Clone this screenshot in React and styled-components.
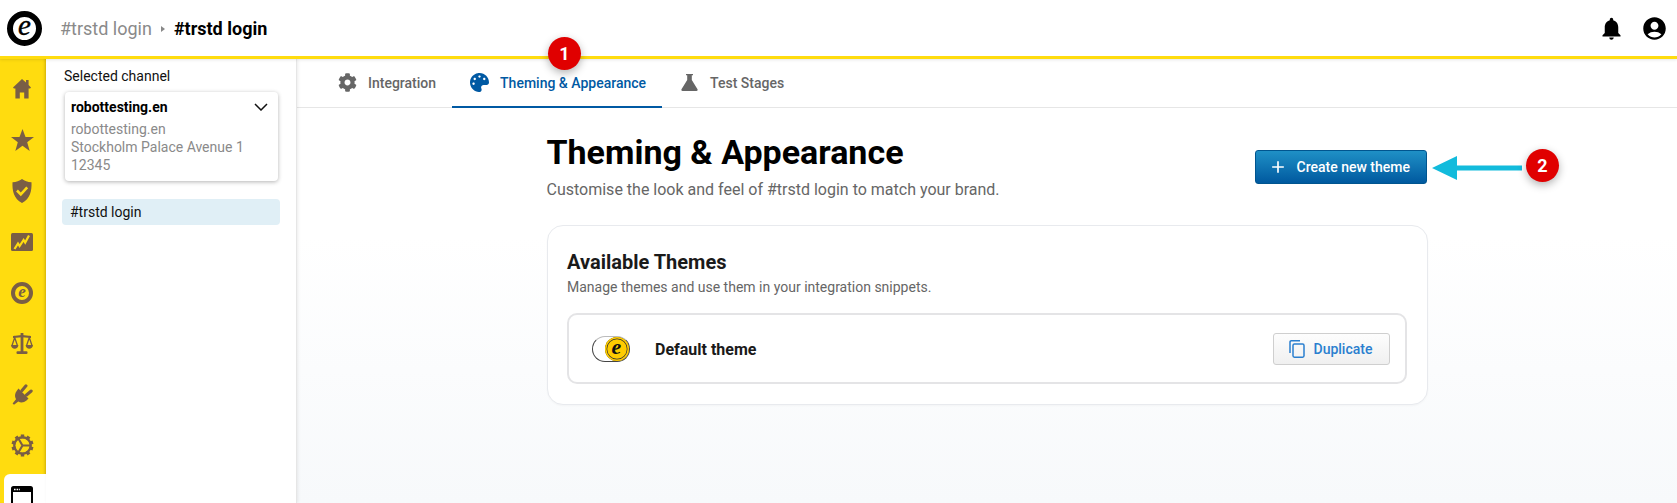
import React from "react";
import styled, { createGlobalStyle } from "styled-components";
import { FaCog, FaPalette } from "react-icons/fa";
import { MdNotifications, MdAccountCircle, MdAdd } from "react-icons/md";

const Global = createGlobalStyle`
  html, body { margin: 0; padding: 0; height: 503px; overflow: hidden; background: #fff; }
  body { font-family: Roboto, "Liberation Sans", sans-serif; }
  * { box-sizing: border-box; }
`;

const Page = styled.div`
  position: relative;
  width: 1677px;
  height: 503px;
  overflow: hidden;
  display: flex;
  flex-direction: column;
`;

const Header = styled.header`
  height: 59px;
  flex: none;
  display: flex;
  align-items: center;
  padding: 0 9px 0 7px;
  background: #fff;
  border-bottom: 3px solid #ffdc0f;
  box-shadow: 0 1px 3px rgba(0,0,0,.1);
  position: relative;
  z-index: 3;
`;

const LogoDisc = styled.div`
  width: 35px;
  height: 35px;
  border-radius: 50%;
  background: #fff;
  border: 6px solid #000;
  color: #000;
  display: flex;
  align-items: center;
  justify-content: center;
  font: italic 400 29px/1 "Liberation Serif", serif;
  -webkit-text-stroke: 0.4px #000;
  padding-bottom: 5px;
`;

const Crumbs = styled.nav`
  display: flex;
  align-items: center;
  margin-left: 18px;
  font-size: 18px;
  color: #8a8a8a;
  flex: 1;
`;

const CrumbArrow = styled.span`
  width: 0;
  height: 0;
  margin: 1px 9px 0 9px;
  border-left: 4px solid #888;
  border-top: 3px solid transparent;
  border-bottom: 3px solid transparent;
`;

const CrumbNow = styled.span`
  color: #000;
  font-weight: 700;
`;

const HeaderIcons = styled.div`
  display: flex;
  align-items: center;
  gap: 16px;
  margin-top: 1px;
  color: #000;
  font-size: 27px;
  svg { display: block; }
`;

const Body = styled.div`
  flex: 1;
  min-height: 0;
  display: flex;
`;

const Rail = styled.aside`
  width: 46px;
  flex: none;
  background: #ffdc0f;
  box-shadow: inset -3px 0 3px -2px rgba(120,90,0,.35);
  display: flex;
  flex-direction: column;
  padding-top: 4px;
`;

const RailItem = styled.div`
  height: 51px;
  flex: none;
  display: flex;
  align-items: center;
  justify-content: center;
  padding-right: 2px;
  svg { display: block; }
`;

const RailActive = styled.div`
  flex: 1;
  margin: 3px 0 0 4px;
  background: #fff;
  border-radius: 6px 0 0 0;
  padding: 12px 0 0 7px;
  min-height: 30px;
`;

const RailE = styled.div`
  width: 22px;
  height: 22px;
  border-radius: 50%;
  background: #ffdc0f;
  border: 4px solid #7a5e45;
  color: #7a5e45;
  display: flex;
  align-items: center;
  justify-content: center;
  font: italic 700 17px/1 "Liberation Serif", serif;
  padding-bottom: 3px;
`;

const Panel = styled.aside`
  width: 251px;
  flex: none;
  background: #fff;
  border-right: 1px solid #e6e6e6;
  box-shadow: 1px 0 3px rgba(0,0,0,.08);
  padding: 9px 15px 0 16px;
  position: relative;
`;

const PanelLabel = styled.div`
  font-size: 14px;
  line-height: 16px;
  color: #111;
  padding-left: 2px;
`;

const ChannelCard = styled.div`
  margin: 8px 3px 0 3px;
  height: 89px;
  background: #fff;
  border-radius: 4px;
  box-shadow: 0 1px 4px rgba(0,0,0,.3);
  padding: 6px 6px;
  font-size: 14px;
  line-height: 18px;
  color: #8a8a8a;
`;

const ChannelName = styled.div`
  display: flex;
  justify-content: space-between;
  align-items: center;
  color: #000;
  font-weight: 700;
  height: 18px;
  margin-bottom: 4px;
`;

const Chevron = styled.svg`
  margin-right: 4px;
  display: block;
`;

const PanelItem = styled.div`
  margin-top: 18px;
  height: 26px;
  width: 218px;
  border-radius: 4px;
  background: #e0eff6;
  padding-left: 8px;
  font-size: 14px;
  line-height: 26px;
  color: #111;
`;

const Main = styled.main`
  flex: 1;
  min-width: 0;
  display: flex;
  flex-direction: column;
  background: linear-gradient(180deg, #ffffff 40%, #f7f9fb 100%);
`;

const Tabs = styled.div`
  height: 49px;
  flex: none;
  display: flex;
  padding-left: 23px;
  background: #fff;
  border-bottom: 1px solid #e6e6e6;
`;

const Tab = styled.div`
  display: flex;
  align-items: center;
  gap: 10px;
  padding: 0 16px;
  height: 49px;
  font-size: 14px;
  font-weight: 500;
  color: ${p => (p.$active ? "#0059a3" : "#666")};
  border-bottom: 2px solid ${p => (p.$active ? "#0059a3" : "transparent")};
`;

const TabIcon = styled.span`
  width: 22px;
  display: flex;
  justify-content: center;
  font-size: 19px;
`;

const Content = styled.div`
  width: 881px;
  margin: 0 auto;
  padding-top: 23px;
`;

const TitleRow = styled.div`
  display: flex;
  justify-content: space-between;
  align-items: flex-start;
`;

const Title = styled.h1`
  margin: 0;
  font-size: 34px;
  line-height: 42px;
  font-weight: 700;
  color: #000;
`;

const Subtitle = styled.p`
  margin: 7px 0 0;
  font-size: 16px;
  line-height: 20px;
  color: #666;
`;

const PrimaryButton = styled.button`
  margin: 19px 1px 0 0;
  width: 172px;
  height: 34px;
  border: 1px solid #00558f;
  border-radius: 3px;
  background: linear-gradient(180deg, #1f90c6 0%, #00599f 100%);
  color: #fff;
  font: 500 14px Roboto, sans-serif;
  display: flex;
  align-items: center;
  padding: 0 0 0 12px;
  gap: 9px;
  svg { font-size: 20px; }
`;

const Card = styled.section`
  margin-top: 25px;
  height: 180px;
  background: #fff;
  border: 1px solid #e8eaee;
  border-radius: 16px;
  padding: 23px 20px 0 19.5px;
  box-shadow: 0 1px 2px rgba(0,0,0,.03);
`;

const CardTitle = styled.h2`
  margin: 0;
  font-size: 20px;
  line-height: 26px;
  font-weight: 700;
  color: #1a1a1a;
`;

const CardSub = styled.p`
  margin: 3px 0 0;
  font-size: 14px;
  line-height: 18px;
  color: #666;
`;

const ThemeRow = styled.div`
  margin-top: 17px;
  height: 71px;
  border: 2px solid #e4e4e6;
  border-radius: 10px;
  display: flex;
  align-items: center;
  padding: 0 15px 0 22.5px;
`;

const Toggle = styled.div`
  width: 38px;
  height: 26px;
  border: 1px solid #444;
  border-top-color: #bbb;
  border-radius: 13px;
  display: flex;
  justify-content: flex-end;
  background: linear-gradient(90deg, #fff 40%, #eee 100%);
  flex: none;
`;

const ToggleKnob = styled.div`
  width: 24px;
  height: 24px;
  border-radius: 50%;
  background: #ffcc00;
  box-shadow: inset 0 0 0 1.5px #ffcc00, inset 0 0 0 2.2px #333;
  color: #111;
  display: flex;
  align-items: center;
  justify-content: center;
  font: italic 700 22px/1 "Liberation Serif", serif;
  padding-bottom: 3px;
`;

const ThemeName = styled.div`
  margin: 2px 0 0 25.5px;
  flex: 1;
  font-size: 16px;
  font-weight: 700;
  color: #1a1a1a;
`;

const GhostButton = styled.button`
  width: 117px;
  height: 32px;
  border: 1px solid #cfcfcf;
  border-radius: 3px;
  background: linear-gradient(180deg, #fdfdfd 0%, #f0f0f0 100%);
  color: #2a7fcf;
  font: 500 14px Roboto, sans-serif;
  display: flex;
  align-items: center;
  padding: 0 0 0 15px;
  gap: 9px;
`;

const Badge = styled.div`
  position: absolute;
  left: ${p => p.$x}px;
  top: ${p => p.$y}px;
  width: 33px;
  height: 33px;
  border-radius: 50%;
  background: #e00000;
  color: #fff;
  font-size: 18px;
  font-weight: 700;
  display: flex;
  align-items: center;
  justify-content: center;
  box-shadow: 0 3px 8px rgba(0,0,0,.3);
  z-index: 5;
`;

const ArrowMark = styled.svg`
  position: absolute;
  left: 1432px;
  top: 156px;
  z-index: 4;
`;

const BROWN = "#7a5e45";
const YEL = "#ffdc0f";

const Home = () => (
  <svg width="18" height="20" viewBox="0 0 18 20">
    <path fill={BROWN} d="M9 0l4 3.6V1h2.6v4.9L18 8.6l-.9 1H15.6V19.5h-4.4v-6H6.8v6H2.4V9.6H.9l-.9-1z" />
  </svg>
);

const Star = () => (
  <svg width="23" height="22" viewBox="0 0 23 22">
    <path fill={BROWN} d="M11.5 0l3 8h8.5l-6.8 5.2L18.7 22l-7.2-5.3L4.3 22l2.5-8.8L0 8h8.5z" />
  </svg>
);

const Shield = () => (
  <svg width="20" height="24" viewBox="0 0 20 24">
    <path fill={BROWN} d="M10 0c2.6 2 5.6 3 9.5 3.2.4 8.8-1.3 16.4-9.5 20.8C1.8 19.6.1 12 .5 3.2 4.4 3 7.4 2 10 0z" />
    <path fill="none" stroke={YEL} strokeWidth="2.6" d="M5 11.5l3.8 3.8 6.4-7" />
  </svg>
);

const Chart = () => (
  <svg width="22" height="18" viewBox="0 0 22 18">
    <rect width="22" height="18" rx="1.5" fill={BROWN} />
    <path fill="none" stroke={YEL} strokeWidth="2.2" d="M3.5 16l3.5-5.5 1.6 2.5 4-6 1.6 2.5 3.8-7" />
  </svg>
);

const Scales = () => (
  <svg width="22" height="21" viewBox="0 0 22 21">
    <g fill={BROWN}>
      <rect x="9.6" y="0" width="2.8" height="19" />
      <rect x="5.5" y="18.2" width="11" height="2.8" rx="1" />
      <path d="M2 3L11 2l9 1v2L11 4.2 2 5z" />
      <path d="M0 12h7.4C7.2 14.6 5.600 15.800 3.700 15.800S.2 14.600 0 12zM14.600 12H22c-.2 2.600-1.800 3.800-3.700 3.800S14.800 14.600 14.600 12z" />
    </g>
    <path fill="none" stroke={BROWN} strokeWidth="1.300" d="M1 12.500L3.700 4.500l2.700 8M15.600 12.500l2.700-8 2.700 8" />
  </svg>
);

const Plug = () => (
  <svg width="21" height="21" viewBox="0 0 21 21">
    <path fill={BROWN} d="M6.500 4.500L16.500 14.500l-2 2c-2.600 2.200-5.800 2.400-8.200 1L2 20.800.6 19.400l3.400-4.200c-1.600-2.600-1.200-5.800.8-8.400z" />
    <path stroke={BROWN} strokeWidth="3" strokeLinecap="round" d="M10 6.500l4-4.700M14.500 11l4.700-4" />
  </svg>
);

const Gear = () => {
  const teeth = Array.from({ length: 10 }, (_, i) => i * 36);
  return (
    <svg width="23" height="23" viewBox="0 0 24 24">
      {teeth.map(a => (
        <rect key={a} x="10.200" y="0.500" width="3.600" height="4" fill={BROWN} transform={`rotate(${a} 12 12)`} />
      ))}
      <circle cx="12" cy="12" r="8.600" fill="none" stroke={BROWN} strokeWidth="2.400" />
      <path fill="none" stroke={BROWN} strokeWidth="2.200" d="M12 12L7.500 4.500M12 12L7.500 19.500M12 12h9" />
    </svg>
  );
};

const WindowIcon = () => (
  <svg width="22" height="24" viewBox="0 0 22 24">
    <rect x="1" y="1" width="20" height="30" rx="1.500" fill="#fff" stroke="#000" strokeWidth="2" />
    <rect x="1" y="1" width="20" height="5" fill="#000" />
    <path stroke="#fff" strokeWidth="1.400" strokeDasharray="1.600 1" d="M3 3.500h6" />
  </svg>
);

const Flask = () => (
  <svg width="17" height="17" viewBox="0 0 17 17">
    <path fill="#666" d="M5 0h7v1.300h-1.200v4.700l5.700 9.300c.4.800 0 1.700-1 1.700H1.500c-1 0-1.400-.9-1-1.700l5.700-9.300V1.300H5z" />
  </svg>
);

const CopyIcon = () => (
  <svg width="16" height="18" viewBox="0 0 16 18" fill="none" stroke="#2a7fcf" strokeWidth="1.500">
    <path d="M1 13V2a1.200 1.200 0 0 1 1.200-1.200H11" />
    <rect x="4" y="4" width="11" height="13.200" rx="1.400" />
  </svg>
);

const rail = [
  <Home key="a" />,
  <Star key="b" />,
  <Shield key="c" />,
  <Chart key="d" />,
  <RailE key="e">e</RailE>,
  <Scales key="f" />,
  <Plug key="g" />,
  <Gear key="h" />,
];

export default function App() {
  return (
    <Page>
      <Global />
      <Header>
        <LogoDisc>e</LogoDisc>
        <Crumbs>
          #trstd login
          <CrumbArrow />
          <CrumbNow>#trstd login</CrumbNow>
        </Crumbs>
        <HeaderIcons>
          <MdNotifications />
          <MdAccountCircle />
        </HeaderIcons>
      </Header>
      <Body>
        <Rail>
          {rail.map((icon, i) => (
            <RailItem key={i}>{icon}</RailItem>
          ))}
          <RailActive>
            <WindowIcon />
          </RailActive>
        </Rail>
        <Panel>
          <PanelLabel>Selected channel</PanelLabel>
          <ChannelCard>
            <ChannelName>
              robottesting.en
              <Chevron width="14" height="8" viewBox="0 0 14 8" fill="none" stroke="#111" strokeWidth="1.500">
                <path d="M1 1l6 6 6-6" />
              </Chevron>
            </ChannelName>
            robottesting.en
            <br />
            Stockholm Palace Avenue 1
            <br />
            12345
          </ChannelCard>
          <PanelItem>#trstd login</PanelItem>
        </Panel>
        <Main>
          <Tabs>
            <Tab>
              <TabIcon><FaCog /></TabIcon>
              Integration
            </Tab>
            <Tab $active>
              <TabIcon><FaPalette /></TabIcon>
              Theming &amp; Appearance
            </Tab>
            <Tab>
              <TabIcon><Flask /></TabIcon>
              Test Stages
            </Tab>
          </Tabs>
          <Content>
            <TitleRow>
              <div>
                <Title>Theming &amp; Appearance</Title>
                <Subtitle>Customise the look and feel of #trstd login to match your brand.</Subtitle>
              </div>
              <PrimaryButton>
                <MdAdd />
                Create new theme
              </PrimaryButton>
            </TitleRow>
            <Card>
              <CardTitle>Available Themes</CardTitle>
              <CardSub>Manage themes and use them in your integration snippets.</CardSub>
              <ThemeRow>
                <Toggle><ToggleKnob>e</ToggleKnob></Toggle>
                <ThemeName>Default theme</ThemeName>
                <GhostButton>
                  <CopyIcon />
                  Duplicate
                </GhostButton>
              </ThemeRow>
            </Card>
          </Content>
        </Main>
      </Body>
      <Badge $x={548} $y={37}>1</Badge>
      <ArrowMark width="92" height="24" viewBox="0 0 92 24">
        <path fill="#12bbdc" d="M0 12L25 0v9.500h65v5H25V24z" />
      </ArrowMark>
      <Badge $x={1526} $y={149}>2</Badge>
    </Page>
  );
}
